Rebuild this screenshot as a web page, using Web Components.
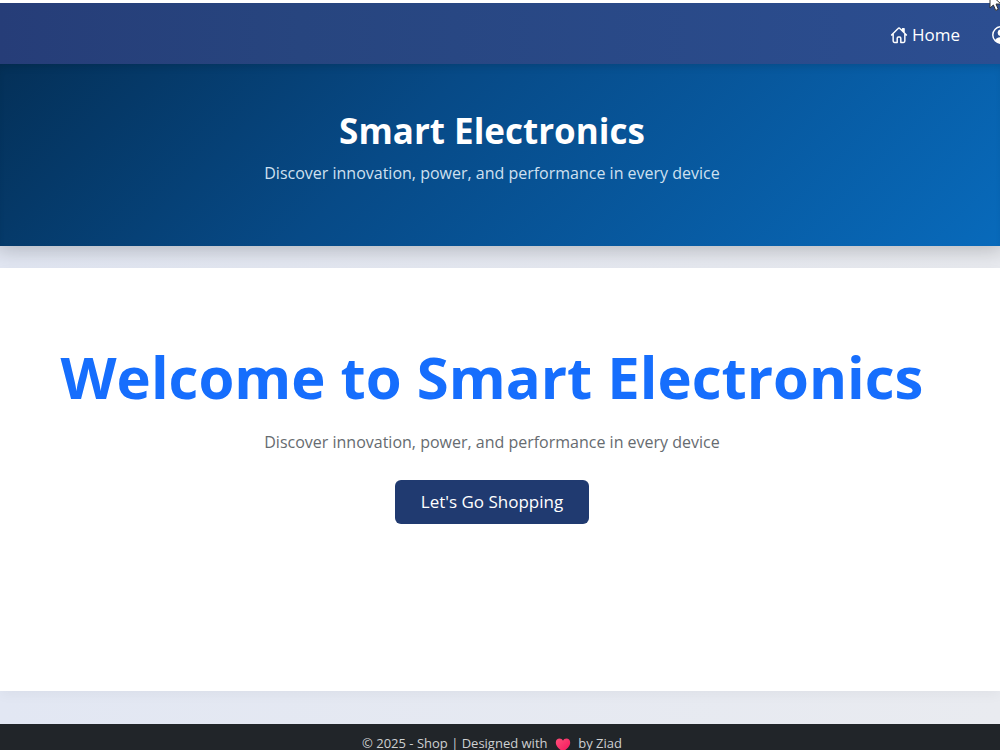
<!DOCTYPE html>
<html lang="en">
<head>
<meta charset="utf-8">
<title>Smart Electronics</title>
<style>
  body {
    margin: 0;
    overflow: hidden;
    font-family: "Segoe UI", "Open Sans", "Noto Sans", sans-serif;
    color: #212529;
    background: linear-gradient(90deg, #e2e7f3, #e9ebf0);
  }
</style>
</head>
<body>
<shop-app></shop-app>
<script>
customElements.define(
  'shop-icon',
  class extends HTMLElement {
    get shapes() {
      return {
        home: `<path d="M1.4 8 7.2 2.2a1.1 1.1 0 0 1 1.6 0L14.6 8M12.5 5.5V2.4h-1.3v1.8M2.8 7.2v6.2c0 .8.5 1.2 1.2 1.2h2.4v-3.8c0-.6.4-1 1-1h1.2c.6 0 1 .4 1 1v3.8H12c.7 0 1.2-.4 1.2-1.2V7.2" fill="none" stroke="currentColor" stroke-width="1.3" stroke-linecap="round" stroke-linejoin="round"/>`,
        person: `<circle cx="8" cy="8" r="7.3" fill="none" stroke="currentColor" stroke-width="1.3"/><circle cx="8" cy="6" r="3" fill="currentColor"/><path d="M2.6 12.8C3.6 10.8 5.4 10 8 10s4.4.8 5.4 2.8C12 14.4 10 15.3 8 15.3s-4-.9-5.4-2.5z" fill="currentColor"/>`,
        heart: `<defs><linearGradient id="g" x1="0" y1="0" x2="1" y2="1"><stop offset="0" stop-color="#ff4f79"/><stop offset="1" stop-color="#f3145c"/></linearGradient></defs><path d="M8 14.6C4.5 12.2.8 9.2.8 5.4.8 3 2.5 1.5 4.5 1.5 6 1.5 7.3 2.4 8 3.8c.7-1.4 2-2.3 3.5-2.3 2 0 3.7 1.5 3.7 3.9 0 3.8-3.7 6.8-7.2 9.2z" fill="url(#g)"/>`
      };
    }
    connectedCallback() {
      this.attachShadow({ mode: 'open' }).innerHTML = `
        <style>
          :host { display: inline-block; width: 18px; height: 18px; }
          svg { display: block; width: 100%; height: 100%; }
        </style>
        <svg viewBox="0 0 16 16" aria-hidden="true">${this.shapes[this.getAttribute('name')]}</svg>
      `;
    }
  }
);

customElements.define(
  'shop-nav',
  class extends HTMLElement {
    connectedCallback() {
      this.attachShadow({ mode: 'open' }).innerHTML = `
        <style>
          :host {
            display: block;
            position: relative;
            overflow: hidden;
            border-top: 3px solid #fff;
            background: linear-gradient(90deg, #263d78, #27457f 30%, #2c4e91);
          }
          nav {
            display: flex;
            justify-content: flex-end;
            align-items: center;
            gap: 32px;
            margin-right: -10px;
            padding: 19px 0 16px;
          }
          a {
            display: flex;
            align-items: center;
            gap: 4px;
            color: #fff;
            font-size: 17px;
            line-height: 26px;
            text-decoration: none;
          }
        </style>
        <nav>
          <a href="#home"><shop-icon name="home"></shop-icon>Home</a>
          <a href="#account" aria-label="Account"><shop-icon name="person"></shop-icon></a>
        </nav>
      `;
    }
  }
);

customElements.define(
  'shop-hero',
  class extends HTMLElement {
    connectedCallback() {
      this.attachShadow({ mode: 'open' }).innerHTML = `
        <style>
          :host {
            display: block;
            padding: 45px 16px 58px 0;
            text-align: center;
            color: #fff;
            background: linear-gradient(135deg, #043058, #074a87 40%, #086abb);
            box-shadow: 0 0 20px 4px rgba(0, 0, 0, .22), inset 0 6px 8px -4px rgba(0, 0, 0, .15);
          }
          h1 {
            margin: 0 0 5px;
            font-size: 35px;
            line-height: 44px;
            font-weight: 700;
          }
          p {
            margin: 0;
            font-size: 16px;
            line-height: 30px;
            color: #cfe0f0;
          }
        </style>
        <h1><slot name="title"></slot></h1>
        <p><slot></slot></p>
      `;
    }
  }
);

customElements.define(
  'shop-welcome',
  class extends HTMLElement {
    connectedCallback() {
      this.attachShadow({ mode: 'open' }).innerHTML = `
        <style>
          :host {
            display: block;
            padding: 71px 16px 167px 0;
            text-align: center;
            background: #fff;
            box-shadow: 0 4px 12px rgba(0, 0, 0, .04);
          }
          h2 {
            margin: 0 0 13px;
            font-size: 58px;
            line-height: 76px;
            font-weight: 700;
            white-space: nowrap;
            color: #166efd;
          }
          p {
            margin: 0 0 24px;
            font-size: 16px;
            line-height: 28px;
            color: #666b70;
          }
          button {
            display: block;
            margin: 0 auto;
            padding: 8px 26px;
            border: 0;
            border-radius: 6px;
            font: inherit;
            font-size: 17px;
            line-height: 28px;
            color: #fff;
            background: #203a70;
            cursor: pointer;
          }
        </style>
        <h2><slot name="title"></slot></h2>
        <p><slot></slot></p>
        <button type="button"><slot name="action"></slot></button>
      `;
    }
  }
);

customElements.define(
  'shop-footer',
  class extends HTMLElement {
    connectedCallback() {
      this.attachShadow({ mode: 'open' }).innerHTML = `
        <style>
          :host {
            display: block;
            padding: 9px 16px 10px 0;
            text-align: center;
            font-size: 13px;
            line-height: 20px;
            color: #ced0d2;
            background: #212529;
          }
          shop-icon {
            width: 16px;
            height: 16px;
            margin: 0 4px;
            vertical-align: middle;
          }
        </style>
        © 2025 - Shop | Designed with <shop-icon name="heart"></shop-icon> by Ziad
      `;
    }
  }
);

customElements.define(
  'shop-cursor',
  class extends HTMLElement {
    connectedCallback() {
      // arrow tip sits above the top edge of the window
      this.attachShadow({ mode: 'open' }).innerHTML = `
        <style>
          :host { position: absolute; top: -7px; right: -3px; width: 14px; height: 20px; }
          svg { display: block; }
        </style>
        <svg width="14" height="20" viewBox="0 0 14 20" aria-hidden="true">
          <path d="M1 1v14l3.4-3 2.3 5.4 2.6-1.1L7 11h5z" fill="#fff" stroke="#333" stroke-width="1"/>
        </svg>
      `;
    }
  }
);

customElements.define(
  'shop-app',
  class extends HTMLElement {
    connectedCallback() {
      this.attachShadow({ mode: 'open' }).innerHTML = `
        <style>
          :host {
            display: block;
            position: relative;
            overflow: hidden;
          }
          main { margin: 22px 0 33px; }
        </style>
        <shop-nav></shop-nav>
        <shop-hero>
          <span slot="title">Smart Electronics</span>
          Discover innovation, power, and performance in every device
        </shop-hero>
        <main>
          <shop-welcome>
            <span slot="title">Welcome to Smart Electronics</span>
            Discover innovation, power, and performance in every device
            <span slot="action">Let's Go Shopping</span>
          </shop-welcome>
        </main>
        <shop-footer></shop-footer>
        <shop-cursor></shop-cursor>
      `;
    }
  }
);
</script>
</body>
</html>
